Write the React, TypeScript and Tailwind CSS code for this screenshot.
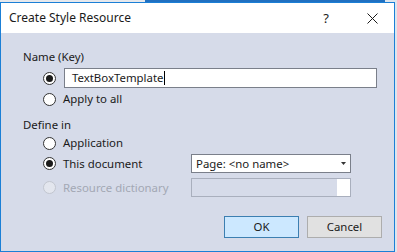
import React from 'react';

function Radio({ checked = false, disabled = false }: { checked?: boolean; disabled?: boolean }) {
  return (
    <span
      className={
        'flex h-[13px] w-[13px] shrink-0 items-center justify-center rounded-full border ' +
        (disabled ? 'border-[#c2c6cf] bg-[#e3e6ee]' : 'border-[#333333] bg-white')
      }
    >
      {checked && <span className="h-[7px] w-[7px] rounded-full bg-[#1b1b1b]" />}
    </span>
  );
}

export default function App() {
  const font = { fontFamily: '"Noto Sans", "Segoe UI", sans-serif' };
  return (
    <div className="flex h-[252px] w-[397px] flex-col overflow-hidden bg-[#dde5ee] text-[11.4px] text-[#1a1a1a]" style={font}>
      {/* desktop strip behind the dialog */}
      <div className="flex h-[2px] shrink-0">
        <div className="w-[145px] bg-[#e6e8ec]" />
        <div className="w-[240px] bg-[#2170c0]" />
        <div className="flex-1 bg-[#dde5ee]" />
      </div>

      <div className="flex flex-1">
        <div className="flex h-[250px] w-[395px] shrink-0 flex-col border border-[#1b7fd6] bg-[#d6dbe9]">
          {/* title bar */}
          <div className="flex h-[30px] shrink-0 items-center bg-white">
            <span className="ml-[8px] text-[12px] leading-none">Create Style Resource</span>
            <span className="ml-auto mr-[38px] text-[13px] leading-none">?</span>
            <svg className="mr-[16px]" width="11" height="11" viewBox="0 0 11 11">
              <path d="M0.5 0.5 L10.5 10.5 M10.5 0.5 L0.5 10.5" stroke="#1a1a1a" strokeWidth="1" />
            </svg>
          </div>

          {/* body */}
          <div className="flex flex-col pl-[22px]">
            <div className="mt-[16px] flex h-[16px] items-center">Name (Key)</div>

            <div className="mt-[3px] flex h-[20px] items-center">
              <span className="ml-[20px]"><Radio checked /></span>
              <div className="ml-[8px] flex h-[20px] w-[313px] items-center border border-[#7a7f8a] bg-white pl-[7px]">
                <span>TextBoxTemplate</span>
                <span className="ml-[1px] h-[14px] w-[1px] bg-black" />
              </div>
            </div>

            <div className="mt-[3px] flex h-[16px] items-center">
              <span className="ml-[20px]"><Radio /></span>
              <span className="ml-[7px]">Apply to all</span>
            </div>

            <div className="mt-[10px] flex h-[16px] items-center">Define in</div>

            <div className="mt-[2px] flex h-[16px] items-center">
              <span className="ml-[20px]"><Radio /></span>
              <span className="ml-[7px]">Application</span>
            </div>

            <div className="mt-[3px] flex h-[19px] items-center">
              <span className="ml-[20px]"><Radio checked /></span>
              <span className="ml-[7px] w-[128px]">This document</span>
              <div className="flex h-[19px] w-[160px] items-center border border-[#7a7f8a] bg-white pl-[4px] pr-[4px]">
                <span>Page: &lt;no name&gt;</span>
                <svg className="ml-auto" width="5" height="3" viewBox="0 0 5 3">
                  <path d="M0 0 H5 L2.5 3 Z" fill="#333" />
                </svg>
              </div>
            </div>

            <div className="mt-[5px] flex h-[19px] items-center">
              <span className="ml-[20px]"><Radio disabled /></span>
              <span className="ml-[7px] w-[128px] text-[#a3a8b4]">Resource dictionary</span>
              <div className="flex h-[19px] w-[160px] border border-[#a9afbd] bg-[#d6dbe9]">
                <div className="ml-auto w-[13px] bg-white" />
              </div>
            </div>

            <div className="mt-[19px] flex h-[22px] items-center">
              <div className="ml-[201px] flex h-[22px] w-[75px] items-center justify-center border border-[#3c7fb1] bg-[#cce8ff]">
                OK
              </div>
              <div className="ml-[8px] flex h-[22px] w-[75px] items-center justify-center border border-[#adadad] bg-[#e1e1e1]">
                Cancel
              </div>
            </div>
          </div>
        </div>
        <div className="flex-1 bg-[#dde5ee]" />
      </div>
    </div>
  );
}
